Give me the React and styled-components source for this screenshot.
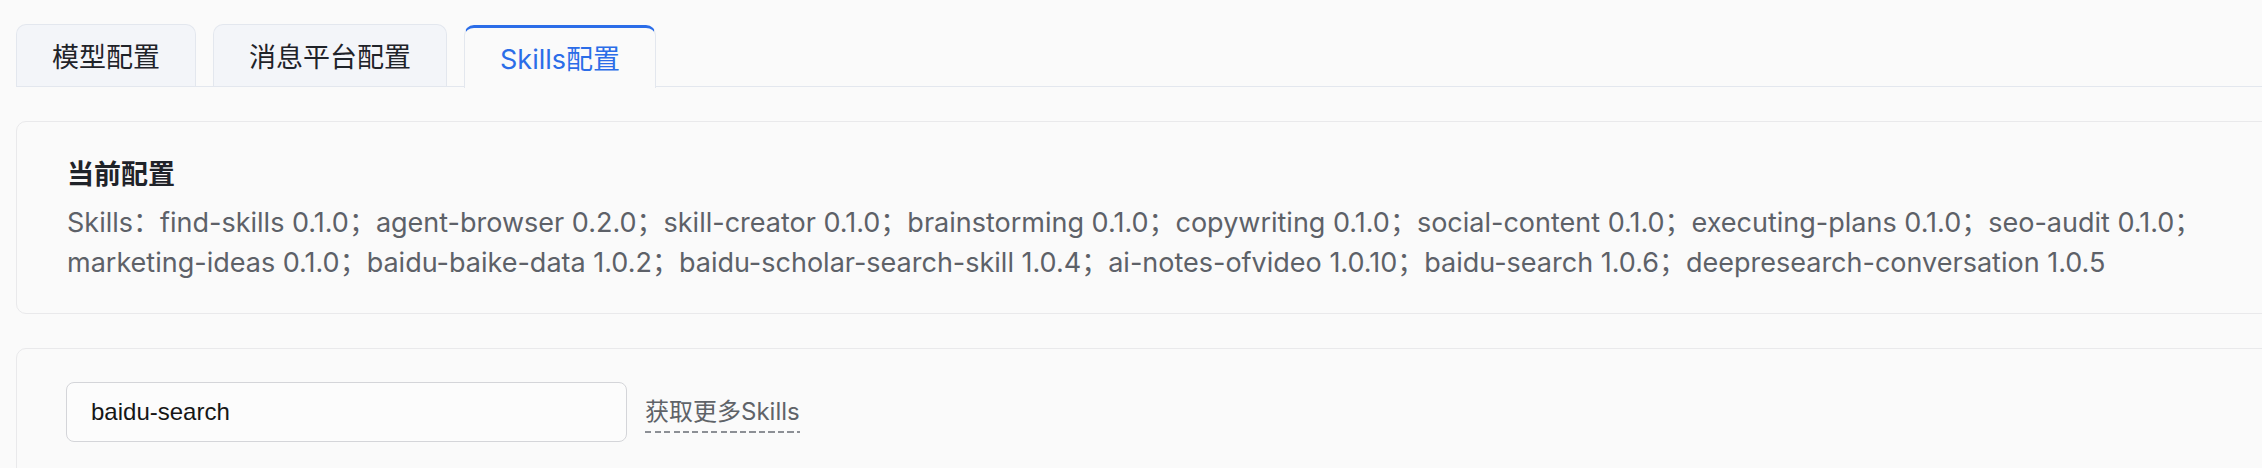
import React from 'react';
import styled, { createGlobalStyle } from 'styled-components';

const GlobalStyle = createGlobalStyle`
  html, body {
    margin: 0;
    padding: 0;
    background: #fafafa;
    overflow: hidden;
  }
  body {
    font-family: "Inter", "Noto Sans CJK SC", sans-serif;
  }
`;

const tabs = ['模型配置', '消息平台配置', 'Skills配置'];

const skills = [
  'find-skills 0.1.0',
  'agent-browser 0.2.0',
  'skill-creator 0.1.0',
  'brainstorming 0.1.0',
  'copywriting 0.1.0',
  'social-content 0.1.0',
  'executing-plans 0.1.0',
  'seo-audit 0.1.0',
  'marketing-ideas 0.1.0',
  'baidu-baike-data 1.0.2',
  'baidu-scholar-search-skill 1.0.4',
  'ai-notes-ofvideo 1.0.10',
  'baidu-search 1.0.6',
  'deepresearch-conversation 1.0.5',
];

const App = () => {
  const active = 2;
  return (
    <>
      <GlobalStyle />
      <Page>
        <TabBar>
          {tabs.map((t, i) => (
            <Tab key={t} $active={i === active}>
              {t}
            </Tab>
          ))}
        </TabBar>
        <Card>
          <Title>当前配置</Title>
          <SkillList>Skills：{skills.join('；')}</SkillList>
        </Card>
        <Card $tight>
          <SearchRow>
            <SearchInput defaultValue="baidu-search" />
            <MoreLink href="#">获取更多Skills</MoreLink>
          </SearchRow>
        </Card>
      </Page>
    </>
  );
};

export default App;

const Page = styled.div`
  width: 2300px;
  padding: 24px 0 0 16px;
  box-sizing: border-box;
`;

const TabBar = styled.div`
  display: flex;
  align-items: flex-end;
  gap: 17px;
  height: 63px;
  border-bottom: 1.5px solid #e3e7ee;
  box-sizing: border-box;
`;

const Tab = styled.div`
  display: flex;
  align-items: center;
  height: ${(p) => (p.$active ? '63px' : '62px')};
  padding: 0 35px;
  margin-bottom: ${(p) => (p.$active ? '-1.5px' : '0')};
  box-sizing: border-box;
  border: 1.5px solid #e3e7ee;
  border-bottom: none;
  border-top: ${(p) => (p.$active ? '3px solid #2b6de8' : '1.5px solid #e3e7ee')};
  border-radius: 10px 10px 0 0;
  background: ${(p) => (p.$active ? '#fafafa' : '#f3f5f9')};
  color: ${(p) => (p.$active ? '#2b6de8' : '#1f2329')};
  font-size: 27px;
  white-space: nowrap;
`;

const Card = styled.section`
  margin-top: 34px;
  margin-right: -10px;
  padding: ${(p) => (p.$tight ? '33px 49px 40px' : '36px 50px 30px')};
  border: 1.5px solid #e9e9eb;
  border-radius: 10px;
  background: #fafafa;
`;

const Title = styled.h3`
  margin: 0 0 11px;
  font-size: 27px;
  line-height: 34px;
  font-weight: 700;
  color: #1f2329;
`;

const SkillList = styled.p`
  margin: 0;
  width: 2160px;
  font-size: 27px;
  line-height: 40px;
  color: #5d6168;
`;

const SearchRow = styled.div`
  display: flex;
  align-items: center;
  gap: 18px;
`;

const SearchInput = styled.input`
  width: 561px;
  height: 60px;
  padding: 0 24px;
  box-sizing: border-box;
  border: 1.5px solid #d4d5d9;
  border-radius: 8px;
  background: #fcfcfc;
  font-family: "Liberation Sans", Arial, sans-serif;
  font-size: 24px;
  color: #161616;
  outline: none;
`;

const MoreLink = styled.a`
  padding-bottom: 6px;
  font-size: 24px;
  color: #5f6368;
  text-decoration: none;
  background-image: repeating-linear-gradient(
    to right,
    #8c8f95 0 6px,
    transparent 6px 9.5px
  );
  background-size: 100% 2px;
  background-position: left bottom;
  background-repeat: no-repeat;
`;
